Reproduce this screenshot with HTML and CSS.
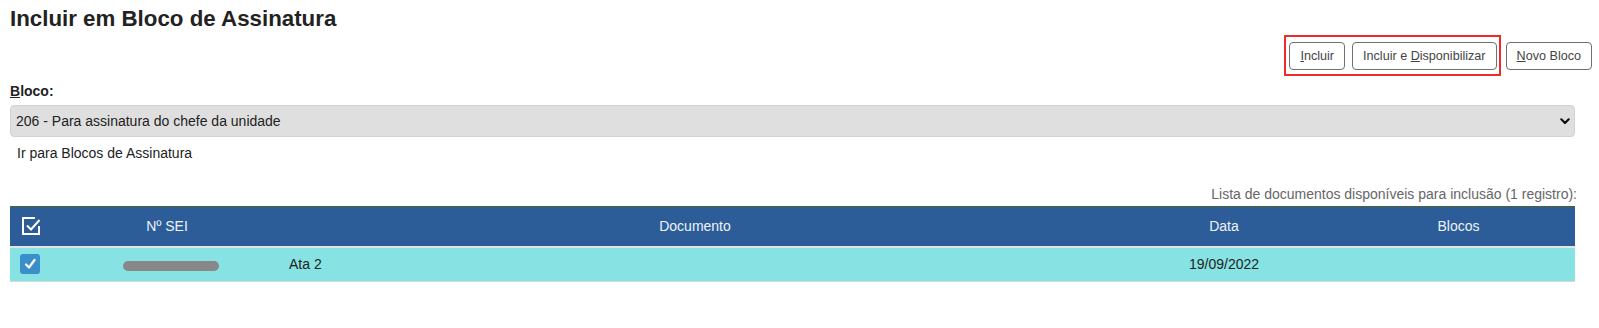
FILE: index.html
```html
<!DOCTYPE html>
<html lang="pt-BR">
<head>
<meta charset="utf-8">
<title>Incluir em Bloco de Assinatura</title>
<link rel="stylesheet" href="styles.css">
</head>
<body>
<div class="page">
  <h1 class="title">Incluir em Bloco de Assinatura</h1>
  <div class="toolbar">
    <div class="highlight">
      <button class="btn" type="button"><u>I</u>ncluir</button>
      <button class="btn" type="button">Incluir e <u>D</u>isponibilizar</button>
    </div>
    <button class="btn" type="button"><u>N</u>ovo Bloco</button>
  </div>
  <label class="label" for="bloco"><u>B</u>loco:</label>
  <div class="select-wrap">
    <select class="select" id="bloco">
      <option>206 - Para assinatura do chefe da unidade</option>
    </select>
    <svg class="chevron" width="10" height="7" viewBox="0 0 10 7"><path d="M1.3 1.3 L5 5 L8.7 1.3" fill="none" stroke="#111" stroke-width="2.2" stroke-linecap="round" stroke-linejoin="round"/></svg>
  </div>
  <a class="link">Ir para Blocos de Assinatura</a>
  <div class="caption">Lista de documentos disponíveis para inclusão (1 registro):</div>
  <table class="grid">
    <colgroup>
      <col class="c-check"><col class="c-sei"><col class="c-doc"><col class="c-data"><col class="c-blocos">
    </colgroup>
    <thead>
      <tr>
        <th class="th-check">
          <svg class="head-icon" width="18" height="18" viewBox="0 0 18 18"><path d="M13 1 H1 V17 H17 V9" fill="none" stroke="#fff" stroke-width="2"/><path d="M5 8.5 L9 12.5 L17.5 3" fill="none" stroke="#fff" stroke-width="2"/></svg>
        </th>
        <th>Nº SEI</th>
        <th>Documento</th>
        <th>Data</th>
        <th>Blocos</th>
      </tr>
    </thead>
    <tbody>
      <tr>
        <td class="td-check"><span class="checkbox"><svg width="20" height="20" viewBox="0 0 20 20"><path d="M6 10.5 L9 13.5 L14.5 6" fill="none" stroke="#fff" stroke-width="2.2" stroke-linecap="round" stroke-linejoin="round"/></svg></span></td>
        <td class="td-center"><span class="redacted"></span></td>
        <td class="td-doc">Ata 2</td>
        <td class="td-center">19/09/2022</td>
        <td class="td-center"></td>
      </tr>
    </tbody>
  </table>
</div>
</body>
</html>
```
FILE: styles.css
```css
* { box-sizing: border-box; }
html, body { margin: 0; padding: 0; background: #fff; }
body { font-family: "Liberation Sans", Arial, sans-serif; color: #222; }

.page {
  width: 1599px;
  padding: 0 7px 0 10px;
}

.title {
  margin: 6px 0 0 0;
  font-size: 22.3px;
  line-height: 26px;
  font-weight: bold;
  color: #222;
}

.toolbar {
  margin-top: 3px;
  display: flex;
  justify-content: flex-end;
  align-items: center;
  gap: 5px;
}

.highlight {
  display: flex;
  gap: 7px;
  border: 2px solid #ee2a2a;
  padding: 5px 2px 4px 3px;
}

.btn {
  height: 28px;
  padding: 0 10px;
  background: #fff;
  border: 1px solid #707070;
  border-radius: 4px;
  font-family: "Liberation Sans", Arial, sans-serif;
  font-size: 12.6px;
  color: #444;
  cursor: pointer;
}

.label {
  display: block;
  margin-top: 7px;
  font-size: 14px;
  line-height: 16px;
  font-weight: bold;
  color: #222;
}

.select-wrap {
  position: relative;
  margin-top: 6px;
  margin-right: 17px;
}

.select {
  appearance: none;
  -webkit-appearance: none;
  display: block;
  width: 100%;
  height: 32px;
  padding: 0 30px 0 5px;
  background: #dfdfdf;
  border: 1px solid #d2d2d2;
  border-radius: 4px;
  font-family: "Liberation Sans", Arial, sans-serif;
  font-size: 14px;
  color: #222;
}

.chevron {
  position: absolute;
  right: 5px;
  top: 13px;
  pointer-events: none;
}

.link {
  display: block;
  margin-top: 8px;
  margin-left: 7px;
  font-size: 14px;
  line-height: 16px;
  color: #222;
}

.caption {
  margin-top: 25px;
  margin-right: 15px;
  text-align: right;
  font-size: 14px;
  line-height: 16px;
  color: #666;
}

.grid {
  margin-top: 4px;
  width: 1565px;
  table-layout: fixed;
  border-collapse: collapse;
  border-top: 1px solid #4f6228;
  font-size: 14px;
}

.c-check { width: 40px; }
.c-sei { width: 234px; }
.c-doc { width: 822px; }
.c-data { width: 236px; }
.c-blocos { width: 233px; }

.grid th {
  height: 40px;
  padding: 0;
  background: #2c5d98;
  color: #eef2f8;
  font-weight: normal;
  text-align: center;
  vertical-align: middle;
  border-bottom: 2px solid #e4e4e4;
}

.head-icon { display: block; margin: 0 auto; position: relative; left: 1px; }

.grid td {
  height: 35px;
  padding: 0;
  background: #87e3e3;
  color: #222;
  vertical-align: middle;
  border-bottom: 1px solid #d8d8d8;
}

.td-check { text-align: center; }
.td-center { text-align: center; }
.grid td.td-doc { text-align: left; padding-left: 5px; }

.checkbox {
  display: inline-block;
  width: 20px;
  height: 20px;
  border-radius: 3px;
  background: #3a8fcb;
  vertical-align: middle;
}
.checkbox svg { display: block; }

.redacted {
  display: inline-block;
  width: 96px;
  height: 10px;
  border-radius: 5px;
  background: #888;
  vertical-align: middle;
  position: relative;
  left: 4px;
}
```
